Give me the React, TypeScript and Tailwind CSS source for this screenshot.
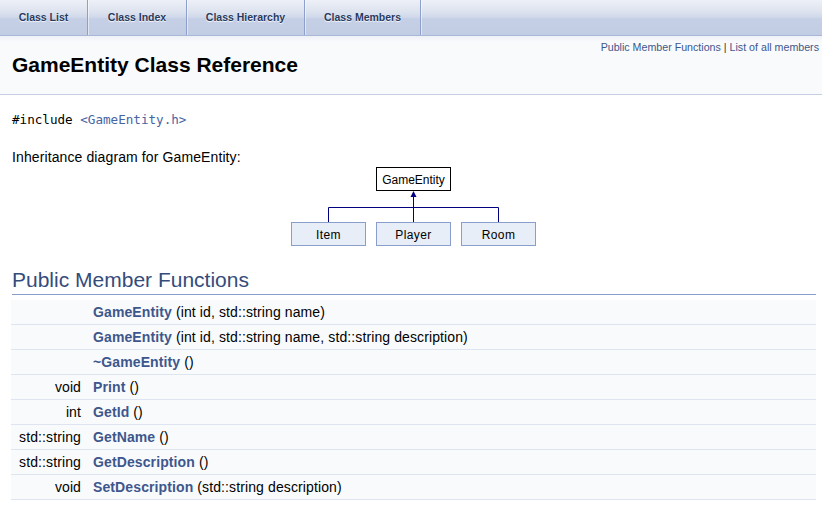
const tabs = [
  { label: "Class List", w: "w-[88px]" },
  { label: "Class Index", w: "w-[99px]" },
  { label: "Class Hierarchy", w: "w-[118px]" },
  { label: "Class Members", w: "w-[116px]" },
];

type Member = { type: string; name: string; args: string };

const members: Member[] = [
  { type: "", name: "GameEntity", args: "(int id, std::string name)" },
  { type: "", name: "GameEntity", args: "(int id, std::string name, std::string description)" },
  { type: "", name: "~GameEntity", args: "()" },
  { type: "void", name: "Print", args: "()" },
  { type: "int", name: "GetId", args: "()" },
  { type: "std::string", name: "GetName", args: "()" },
  { type: "std::string", name: "GetDescription", args: "()" },
  { type: "void", name: "SetDescription", args: "(std::string description)" },
];

function Diagram() {
  const kids = [
    { x: 3.5, label: "Item" },
    { x: 88.5, label: "Player" },
    { x: 173.5, label: "Room" },
  ];
  return (
    <svg width="251" height="84" viewBox="0 0 251 84" className="block">
      <rect x="88.5" y="3.5" width="74" height="23" fill="#ffffff" stroke="#000000" />
      <text x="125.5" y="19.5" textAnchor="middle" fontSize="12" fontFamily="'Liberation Sans', Arial, sans-serif" fill="#000">
        GameEntity
      </text>
      <line x1="125.5" y1="31" x2="125.5" y2="58" stroke="#000080" />
      <polygon points="125.5,27 122.5,33 128.5,33" fill="#000080" />
      <line x1="40.5" y1="43.5" x2="210.5" y2="43.5" stroke="#000080" />
      <line x1="40.5" y1="43.5" x2="40.5" y2="58" stroke="#000080" />
      <line x1="210.5" y1="43.5" x2="210.5" y2="58" stroke="#000080" />
      {kids.map((k) => (
        <g key={k.label}>
          <rect x={k.x} y="58.5" width="74" height="23" fill="#E8EEF7" stroke="#8A9ECC" />
          <text
            x={k.x + 37}
            y="74.5"
            textAnchor="middle"
            fontSize="12"
            letterSpacing="0.4"
            fontFamily="'Liberation Sans', Arial, sans-serif"
            fill="#000"
          >
            {k.label}
          </text>
        </g>
      ))}
    </svg>
  );
}

export default function App() {
  return (
    <div className="min-h-[525px] w-[822px] bg-white font-['Liberation_Sans',Arial,sans-serif] text-[14px] text-black">
      {/* tab bar */}
      <div className="flex h-[36px] border-b border-[#a9b7d6] bg-[linear-gradient(to_bottom,#EDF0F7_0%,#DCE2EE_35%,#CFD8EA_50%,#C5D0E6_53%,#C2CDE4_100%)]">
        {tabs.map((t) => (
          <div
            key={t.label}
            className={`${t.w} flex items-center justify-center border-r border-[#8DA0CC] text-[10.5px] font-bold leading-[35px] text-[#283A5D] shadow-[1px_0_0_rgba(255,255,255,0.5)] [text-shadow:0_1px_1px_rgba(255,255,255,0.9)]`}
          >
            {t.label}
          </div>
        ))}
      </div>

      {/* header */}
      <div className="flex h-[59px] justify-between border-b border-[#C4CFE5] bg-[linear-gradient(to_bottom,#EEF1F7_0px,#F9FAFC_6px)]">
        <div className="pl-[12px] pt-[15px] text-[21px] font-bold leading-[28px]">GameEntity Class Reference</div>
        <div className="pr-[3px] pt-[4px] text-[10.67px] leading-[14px] text-[#3D578C]">
          Public Member Functions <span className="text-[#333]">|</span> List of all members
        </div>
      </div>

      {/* contents */}
      <div className="pl-[11px] pr-[6px]">
        <div className="mt-[17px] pl-[1px] font-['DejaVu_Sans_Mono',monospace] text-[12.6px] leading-[16px]">
          #include <span className="text-[#4665A2]">&lt;GameEntity.h&gt;</span>
        </div>

        <div className="mt-[19px] pl-[1px] leading-[20px] tracking-[0.11px]">Inheritance diagram for GameEntity:</div>

        <div className="mt-[-3px] flex justify-center">
          <Diagram />
        </div>

        <h2 className="mt-[18px] ml-[1px] border-b border-[#879ECB] text-[21px] leading-[28px] text-[#354C7B]">
          Public Member Functions
        </h2>

        <div className="mt-[5px] tracking-[0.11px]">
          {members.map((m, i) => (
            <div key={i} className="flex h-[25px] border-b border-[#DEE4F0] bg-[#F9FAFC] leading-[24px]">
              <div className="w-[82px] shrink-0 pr-[12px] text-right">{m.type}</div>
              <div className="whitespace-nowrap">
                <span className="font-bold text-[#3D578C]">{m.name}</span> {m.args}
              </div>
            </div>
          ))}
        </div>
      </div>
    </div>
  );
}
